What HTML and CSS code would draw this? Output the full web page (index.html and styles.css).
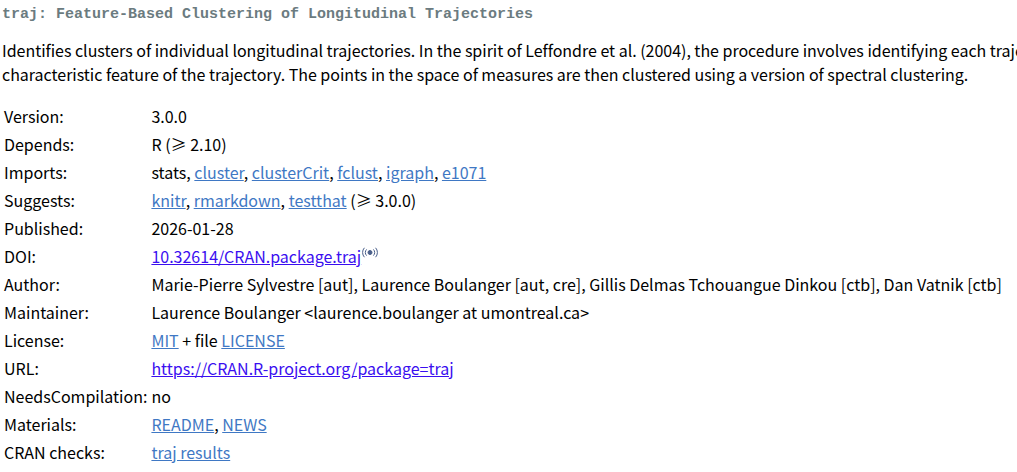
FILE: index.html
```
<!DOCTYPE html>
<html lang="en">
<head>
<meta charset="utf-8">
<title>CRAN: Package traj</title>
<link rel="stylesheet" href="styles.css">
</head>
<body>
<h2 class="title">traj: Feature-Based Clustering of Longitudinal Trajectories</h2>
<p class="desc">Identifies clusters of individual longitudinal trajectories. In the spirit of Leffondre et al. (2004), the procedure involves identifying each trajectory<br>characteristic feature of the trajectory. The points in the space of measures are then clustered using a version of spectral clustering.</p>
<table class="meta">
<tr><td>Version:</td><td>3.0.0</td></tr>
<tr><td>Depends:</td><td>R (≥ 2.10)</td></tr>
<tr><td>Imports:</td><td>stats, <a href="#">cluster</a>, <a href="#">clusterCrit</a>, <a href="#">fclust</a>, <a href="#">igraph</a>, <a href="#">e1071</a></td></tr>
<tr><td>Suggests:</td><td><a href="#">knitr</a>, <a href="#">rmarkdown</a>, <a href="#">testthat</a> (≥ 3.0.0)</td></tr>
<tr><td>Published:</td><td>2026-01-28</td></tr>
<tr><td>DOI:</td><td><a class="ext" href="#">10.32614/CRAN.package.traj</a><svg class="doi" width="18" height="11" viewBox="0 0 18 11" aria-hidden="true"><circle cx="9" cy="5.5" r="2"/><path d="M5.6 2.4a4.4 4.4 0 0 0 0 6.2M12.4 2.4a4.4 4.4 0 0 1 0 6.2M3.4.8a7 7 0 0 0 0 9.4M14.6.8a7 7 0 0 1 0 9.4"/></svg></td></tr>
<tr><td>Author:</td><td>Marie-Pierre Sylvestre [aut], Laurence Boulanger [aut, cre], Gillis Delmas Tchouangue Dinkou [ctb], Dan Vatnik [ctb]</td></tr>
<tr><td>Maintainer:</td><td>Laurence Boulanger &lt;laurence.boulanger at umontreal.ca&gt;</td></tr>
<tr><td>License:</td><td><a href="#">MIT</a> + file <a href="#">LICENSE</a></td></tr>
<tr><td>URL:</td><td><a class="ext" href="#">https://CRAN.R-project.org/package=traj</a></td></tr>
<tr><td>NeedsCompilation:</td><td>no</td></tr>
<tr><td>Materials:</td><td><a href="#">README</a>, <a href="#">NEWS</a></td></tr>
<tr><td>CRAN checks:</td><td><a href="#">traj results</a></td></tr>
</table>
</body>
</html>
```

FILE: styles.css
```
html, body {
  overflow: hidden;
  height: 100%;
}
body {
  margin: 0;
  padding: 0 0 0 2px;
  background: #fff;
  color: #000;
  font-family: "Noto Sans CJK SC", "Noto Sans", sans-serif;
  font-size: 16px;
  line-height: 24px;
}
.title {
  margin: 0;
  padding: 4px 0 0 0;
  font-family: "Liberation Mono", monospace;
  font-size: 15px;
  font-weight: bold;
  line-height: 22px;
  color: #6b7b80;
}
.desc {
  margin: 12px 0 0 0;
  white-space: nowrap;
  letter-spacing: -0.02px;
}
.meta {
  margin: 16px 0 0 0;
  border-collapse: collapse;
}
.meta td {
  padding: 2px 2px;
  height: 24px;
  white-space: nowrap;
  vertical-align: top;
}
a {
  color: #3f78c4;
  text-decoration: underline;
}
a.ext {
  color: #3a0ef0;
}
.doi {
  vertical-align: 5px;
  fill: #4a5f8a;
  stroke: #4a5f8a;
  stroke-width: 1;
}
.doi path {
  fill: none;
}
```
